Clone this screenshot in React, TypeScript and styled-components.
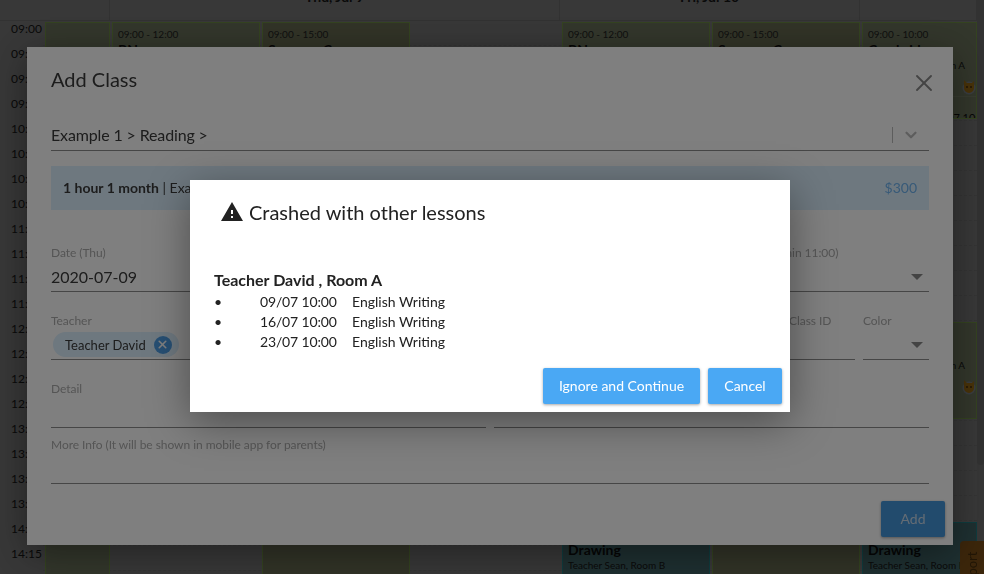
import React from 'react';
import styled, { createGlobalStyle } from 'styled-components';
import { X, ChevronDown } from 'lucide-react';

const GlobalStyle = createGlobalStyle`
  html, body {
    margin: 0;
    height: 100%;
    overflow: hidden;
    font-family: Lato, "Open Sans", sans-serif;
    color: #222;
  }
`;

/* calendar behind the dialogs */

const Page = styled.div`
  width: 984px;
  height: 574px;
  overflow: hidden;
  display: flex;
  background: #b4b4b4;
`;

const Calendar = styled.div`
  flex: 1;
  min-width: 0;
  overflow: hidden;
`;

const ScrollTrack = styled.div`
  width: 7px;
  flex: none;
  background: #b0b0b0;
`;

const ScrollThumb = styled.div`
  height: 465px;
  border-radius: 0 0 4px 4px;
  background: #a0a0a0;
`;

const HeaderRow = styled.div`
  display: grid;
  grid-template-columns: 110px 450px 300px 1fr;
  height: 21px;
  border-bottom: 1px solid #a0a0a0;
  box-sizing: border-box;
`;

const HeaderCell = styled.div`
  border-right: 1px solid #a0a0a0;
  font-size: 14px;
  font-weight: 700;
  line-height: 14px;
  margin-top: -10px;
  height: 31px;
  text-align: center;
  color: #222;
`;

const Grid = styled.div`
  display: grid;
  grid-template-columns: 43px 67px 150px 150px 150px 150px 150px 1fr;
  grid-template-rows: repeat(23, 25px);
`;

const TimeLabel = styled.div<{ $row: number }>`
  grid-column: 1;
  grid-row: ${(p) => p.$row};
  font-size: 12px;
  line-height: 16px;
  padding-left: 11px;
  color: #222;
`;

const RowLine = styled.div<{ $row: number }>`
  grid-column: 2 / -1;
  grid-row: ${(p) => p.$row};
  border-bottom: 1px dashed #a8a8a8;
`;

const EventCard = styled.div<{ $col: number; $from: number; $to: number; $tone: 'green' | 'olive' | 'teal' }>`
  grid-column: ${(p) => p.$col};
  grid-row: ${(p) => p.$from} / ${(p) => p.$to};
  margin: 1px 0 2px 2px;
  padding: 4px 5px;
  overflow: hidden;
  box-sizing: border-box;
  border: 1px solid ${(p) => (p.$tone === 'teal' ? '#30c0c8' : '#a8d868')};
  background: ${(p) => (p.$tone === 'teal' ? '#629a9e' : p.$tone === 'olive' ? '#a0a67e' : '#a4b08c')};
  color: #111;
`;

const EventTime = styled.div`
  font-size: 10px;
  line-height: 14px;
  color: #333;
`;

const EventTitle = styled.div`
  font-size: 14px;
  font-weight: 700;
  line-height: 17px;
  white-space: nowrap;
`;

const EventMeta = styled.div`
  font-size: 10px;
  line-height: 14px;
  white-space: nowrap;
  color: #222;
`;

const EventTag = styled.div`
  display: flex;
  align-items: center;
  gap: 1px;
  width: max-content;
  margin: 7px 0 0 94px;
  font-size: 11px;
  line-height: 16px;
  white-space: nowrap;
`;

const TagGlyph = styled.svg`
  flex: none;
`;

const EventNote = styled.div`
  margin: 1px -5px 0;
  padding: 14px 0 0 84px;
  border-top: 1px solid #b4c09c;
  font-size: 11px;
  line-height: 14px;
  white-space: nowrap;
`;

const SupportTab = styled.div`
  position: fixed;
  right: 0;
  bottom: 0;
  width: 24px;
  height: 33px;
  background: #c07a24;
  border-radius: 4px 0 0 0;
  overflow: hidden;
  color: #6d4712;
`;

const SupportText = styled.span`
  display: block;
  font-size: 13px;
  writing-mode: vertical-rl;
  transform: rotate(180deg);
  margin-left: 4px;
  height: 56px;
`;

const Scrim = styled.div`
  position: fixed;
  inset: 0;
  background: rgba(0, 0, 0, 0.38);
`;

/* Add Class dialog */

const Modal = styled.div`
  position: fixed;
  left: 27px;
  top: 47px;
  width: 926px;
  height: 498px;
  box-sizing: border-box;
  padding: 17px 24px 8px;
  background: #fff;
  box-shadow: 0 8px 36px rgba(0, 0, 0, 0.4);
  display: flex;
  flex-direction: column;
  color: #3a3a3a;
`;

const ModalHead = styled.div`
  display: flex;
  justify-content: space-between;
  align-items: flex-start;
  height: 55px;
`;

const ModalTitle = styled.h2`
  margin: 0;
  font-size: 20px;
  font-weight: 400;
  line-height: 30px;
`;

const CloseButton = styled.span`
  display: block;
  color: #888;
  margin: 5px -9px 0 0;
  height: 28px;
`;

const CourseSelect = styled.div`
  display: flex;
  align-items: center;
  height: 33px;
  box-sizing: border-box;
  border-bottom: 1px solid #8c8c8c;
  font-size: 16px;
  letter-spacing: -0.14px;
  padding-right: 9px;
`;

const CourseValue = styled.span`
  flex: 1;
`;

const SelectDivider = styled.span`
  width: 1px;
  height: 16px;
  background: #bbb;
  margin: 2px 9px 0 0;
`;

const SelectChevron = styled(ChevronDown)`
  margin-top: 2px;
`;

const InfoBar = styled.div`
  display: flex;
  justify-content: space-between;
  align-items: center;
  height: 44px;
  margin-top: 15px;
  padding: 0 12px 2px;
  box-sizing: border-box;
  background: #dcf0ff;
  font-size: 14px;
`;

const InfoName = styled.b`
  font-weight: 700;
`;

const Price = styled.span`
  color: #6fb4f0;
`;

const FormRow = styled.div<{ $top: number }>`
  display: flex;
  gap: 8px;
  margin-top: ${(p) => p.$top}px;
`;

const Field = styled.div<{ $grow?: number; $width?: number }>`
  flex: ${(p) => (p.$width ? `0 0 ${p.$width}px` : `${p.$grow ?? 1} 1 0`)};
  min-width: 0;
`;

const FieldLabel = styled.div<{ $end?: boolean }>`
  font-size: 12px;
  line-height: 16px;
  letter-spacing: -0.05px;
  color: #aaa;
  white-space: nowrap;
  padding-left: ${(p) => (p.$end ? '236px' : '0')};
`;

const FieldInput = styled.div<{ $height: number }>`
  height: ${(p) => p.$height}px;
  border-bottom: 1px solid #8c8c8c;
  box-sizing: border-box;
  display: flex;
  align-items: center;
  justify-content: space-between;
  font-size: 16px;
  margin-top: 1px;
`;

const Caret = styled.span`
  width: 0;
  height: 0;
  border-left: 6px solid transparent;
  border-right: 6px solid transparent;
  border-top: 6px solid #888;
  margin-right: 6px;
`;

const Chip = styled.span`
  display: inline-flex;
  align-items: center;
  height: 25px;
  margin-left: 2px;
  padding: 0 7px 0 12px;
  gap: 8px;
  border-radius: 13px;
  background: #dcf0ff;
  font-size: 13px;
`;

const ChipRemove = styled.span`
  width: 18px;
  height: 18px;
  border-radius: 50%;
  background: #4f9fe6;
  color: #fff;
  display: flex;
  align-items: center;
  justify-content: center;
`;

const ModalFoot = styled.div`
  display: flex;
  justify-content: flex-end;
  margin: 17px -16px 0 0;
`;

const Button = styled.button<{ $min?: number; $muted?: boolean }>`
  height: 36px;
  min-width: ${(p) => p.$min ?? 64}px;
  padding: 0 15.5px 2px;
  border: 0;
  border-radius: 2px;
  background: ${(p) => (p.$muted ? '#4496da' : '#4aa8f4')};
  color: ${(p) => (p.$muted ? '#c8d8e8' : '#fff')};
  font-family: inherit;
  font-size: 14px;
  box-shadow: 0 1px 3px rgba(0, 0, 0, 0.35);
`;

/* Conflict alert on top */

const Backdrop = styled.div`
  position: fixed;
  inset: 0;
  background: rgba(0, 0, 0, 0.5);
  padding: 180px 4px 0 0;
  display: flex;
  justify-content: center;
  align-items: flex-start;
`;

const Alert = styled.div`
  width: 600px;
  height: 232px;
  box-sizing: border-box;
  padding: 18px 8px 8px 24px;
  background: #fff;
  box-shadow: 0 10px 40px rgba(0, 0, 0, 0.4);
  display: flex;
  flex-direction: column;
`;

const AlertTitle = styled.div`
  display: flex;
  align-items: center;
  gap: 5px;
  margin-left: 6px;
  font-size: 20px;
  line-height: 28px;
  color: #222;
`;

const TeacherName = styled.div`
  margin-top: 42px;
  font-size: 16px;
  font-weight: 700;
  line-height: 24px;
  color: #222;
`;

const ClashList = styled.ul`
  margin: 0;
  padding: 0;
  list-style: none;
`;

const ClashItem = styled.li`
  display: flex;
  font-size: 14px;
  line-height: 20px;
  color: #222;
`;

const Bullet = styled.span`
  width: 46px;
`;

const ClashTime = styled.span`
  width: 92px;
  letter-spacing: -0.15px;
`;

const AlertActions = styled.div`
  margin-top: auto;
  display: flex;
  justify-content: flex-end;
  gap: 8px;
`;

const times = ['09:00','09:15','09:30','09:45','10:00','10:15','10:30','10:45','11:00','11:15','11:30','11:45','12:00','12:15','12:30','12:45','13:00','13:15','13:30','13:45','14:00','14:15','14:30'];
const clashes = ['09/07 10:00', '16/07 10:00', '23/07 10:00'];

const WarningIcon = () => (
  <svg width="24" height="24" viewBox="0 0 24 24" fill="#222">
    <path d="M1 21h22L12 2 1 21zm12-3h-2v-2h2v2zm0-4h-2v-4h2v4z" />
  </svg>
);

const TagIcon = () => (
  <TagGlyph width="14" height="16" viewBox="0 0 14 16">
    <circle cx="7" cy="9" r="6.5" fill="#b8c4d0" />
    <path d="M2 1l3 3h5l2-2v7a5 5 0 0 1-10 0z" fill="#e8a21e" />
    <circle cx="5" cy="8" r="1" fill="#6b4310" />
    <circle cx="9" cy="8" r="1" fill="#6b4310" />
  </TagGlyph>
);

const App = () => {
  return (
    <>
      <GlobalStyle />
      <Page>
        <Calendar>
          <HeaderRow>
            <HeaderCell />
            <HeaderCell>Thu, Jul 9</HeaderCell>
            <HeaderCell>Fri, Jul 10</HeaderCell>
            <HeaderCell />
          </HeaderRow>
          <Grid>
            {times.map((t, i) => (
              <React.Fragment key={t}>
                <TimeLabel $row={i + 1}>{t}</TimeLabel>
                <RowLine $row={i + 1} />
              </React.Fragment>
            ))}
            <EventCard $col={2} $from={1} $to={24} $tone="green" />
            <EventCard $col={3} $from={1} $to={13} $tone="green">
              <EventTime>09:00 - 12:00</EventTime>
              <EventTitle>BN</EventTitle>
            </EventCard>
            <EventCard $col={4} $from={1} $to={24} $tone="olive">
              <EventTime>09:00 - 15:00</EventTime>
              <EventTitle>Summer C</EventTitle>
            </EventCard>
            <EventCard $col={6} $from={1} $to={13} $tone="green">
              <EventTime>09:00 - 12:00</EventTime>
              <EventTitle>BN</EventTitle>
            </EventCard>
            <EventCard $col={7} $from={1} $to={24} $tone="olive">
              <EventTime>09:00 - 15:00</EventTime>
              <EventTitle>Summer C</EventTitle>
            </EventCard>
            <EventCard $col={8} $from={1} $to={5} $tone="green">
              <EventTime>09:00 - 10:00</EventTime>
              <EventTitle>Cambridge</EventTitle>
              <EventMeta>Teacher Sean, Room A</EventMeta>
              <EventTag><TagIcon />C</EventTag>
              <EventNote>07 10:45</EventNote>
            </EventCard>
            <EventCard $col={8} $from={13} $to={17} $tone="green">
              <EventTime>12:00 - 13:00</EventTime>
              <EventTitle>Reading</EventTitle>
              <EventMeta>Teacher Sean, Room A</EventMeta>
              <EventTag><TagIcon />C</EventTag>
            </EventCard>
            <EventCard $col={6} $from={21} $to={24} $tone="teal">
              <EventTime>14:00 - 15:00</EventTime>
              <EventTitle>Drawing</EventTitle>
              <EventMeta>Teacher Sean, Room B</EventMeta>
            </EventCard>
            <EventCard $col={8} $from={21} $to={24} $tone="teal">
              <EventTime>14:00 - 15:00</EventTime>
              <EventTitle>Drawing</EventTitle>
              <EventMeta>Teacher Sean, Room B</EventMeta>
            </EventCard>
          </Grid>
        </Calendar>
        <ScrollTrack><ScrollThumb /></ScrollTrack>
      </Page>
      <SupportTab><SupportText>Support</SupportText></SupportTab>
      <Scrim />

      <Modal>
        <ModalHead>
          <ModalTitle>Add Class</ModalTitle>
          <CloseButton><X size={28} strokeWidth={1.6} /></CloseButton>
        </ModalHead>
        <CourseSelect>
          <CourseValue>Example 1 &gt; Reading &gt;</CourseValue>
          <SelectDivider />
          <SelectChevron size={18} color="#bbb" strokeWidth={3} />
        </CourseSelect>
        <InfoBar>
          <span><InfoName>1 hour 1 month</InfoName> | Example 1</span>
          <Price>$300</Price>
        </InfoBar>
        <FormRow $top={35}>
          <Field>
            <FieldLabel>Date (Thu)</FieldLabel>
            <FieldInput $height={30}>2020-07-09</FieldInput>
          </Field>
          <Field>
            <FieldLabel $end>Duration (min 11:00)</FieldLabel>
            <FieldInput $height={30}><span /><Caret /></FieldInput>
          </Field>
        </FormRow>
        <FormRow $top={21}>
          <Field $grow={1}>
            <FieldLabel>Teacher</FieldLabel>
            <FieldInput $height={30}>
              <Chip>
                Teacher David
                <ChipRemove><X size={13} strokeWidth={3} /></ChipRemove>
              </Chip>
            </FieldInput>
          </Field>
          <Field $grow={1}>
            <FieldLabel>Room</FieldLabel>
            <FieldInput $height={30} />
          </Field>
          <Field $width={66}>
            <FieldLabel>Class ID</FieldLabel>
            <FieldInput $height={30} />
          </Field>
          <Field $width={66}>
            <FieldLabel>Color</FieldLabel>
            <FieldInput $height={30}><span /><Caret /></FieldInput>
          </Field>
        </FormRow>
        <FormRow $top={21}>
          <Field>
            <FieldLabel>Detail</FieldLabel>
            <FieldInput $height={30} />
          </Field>
          <Field>
            <FieldLabel>&nbsp;</FieldLabel>
            <FieldInput $height={30} />
          </Field>
        </FormRow>
        <FormRow $top={9}>
          <Field>
            <FieldLabel>More Info (It will be shown in mobile app for parents)</FieldLabel>
            <FieldInput $height={30} />
          </Field>
        </FormRow>
        <ModalFoot>
          <Button $muted>Add</Button>
        </ModalFoot>
      </Modal>

      <Backdrop>
        <Alert>
          <AlertTitle>
            <WarningIcon />
            Crashed with other lessons
          </AlertTitle>
          <TeacherName>Teacher David , Room A</TeacherName>
          <ClashList>
            {clashes.map((c) => (
              <ClashItem key={c}>
                <Bullet>•</Bullet>
                <ClashTime>{c}</ClashTime>
                <span>English Writing</span>
              </ClashItem>
            ))}
          </ClashList>
          <AlertActions>
            <Button $min={157}>Ignore and Continue</Button>
            <Button $min={74}>Cancel</Button>
          </AlertActions>
        </Alert>
      </Backdrop>
    </>
  );
};

export default App;
